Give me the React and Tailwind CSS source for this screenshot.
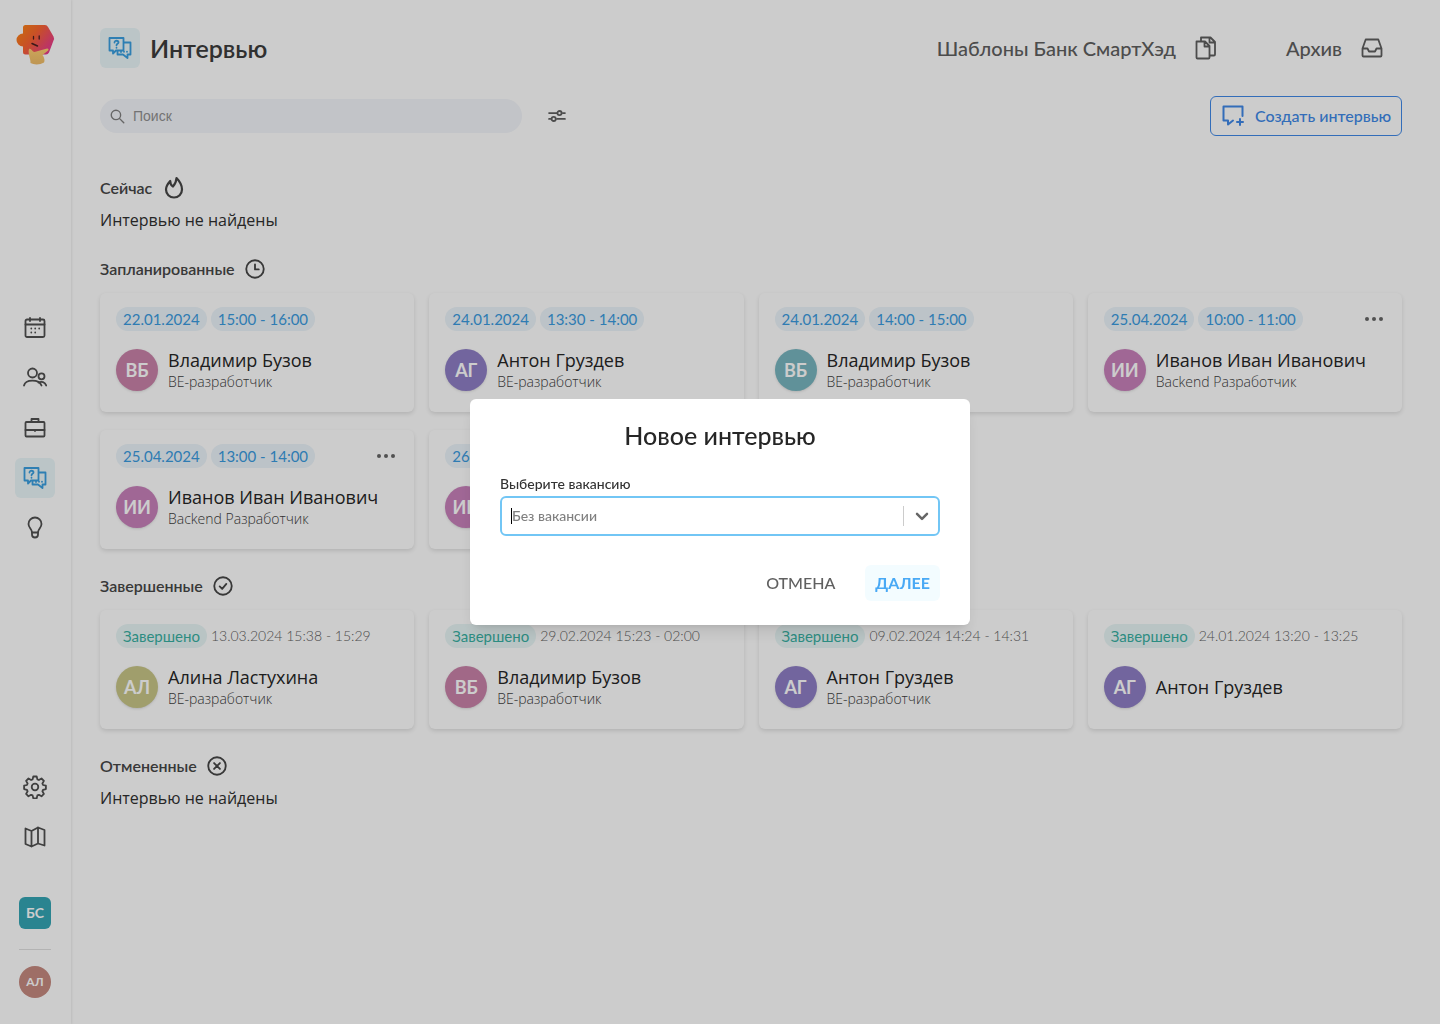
import React, { useState } from 'react'
import clsx from 'clsx'

const planned = [
  { date: '22.01.2024', time: '15:00 - 16:00', initials: 'ВБ', name: 'Владимир Бузов', role: 'BE-разработчик', color: 'bg-[#ca82a9]' },
  { date: '24.01.2024', time: '13:30 - 14:00', initials: 'АГ', name: 'Антон Груздев', role: 'BE-разработчик', color: 'bg-[#8f7fc6]' },
  { date: '24.01.2024', time: '14:00 - 15:00', initials: 'ВБ', name: 'Владимир Бузов', role: 'BE-разработчик', color: 'bg-[#78b6c0]' },
  { date: '25.04.2024', time: '10:00 - 11:00', initials: 'ИИ', name: 'Иванов Иван Иванович', role: 'Backend Разработчик', color: 'bg-[#c881bb]', menu: true },
  { date: '25.04.2024', time: '13:00 - 14:00', initials: 'ИИ', name: 'Иванов Иван Иванович', role: 'Backend Разработчик', color: 'bg-[#c881bb]', menu: true },
  { date: '26.04.2024', time: '13:00 - 14:00', initials: 'ИИ', name: 'Иванов Иван Иванович', role: 'Backend Разработчик', color: 'bg-[#c881bb]', menu: true },
]

const finished = [
  { when: '13.03.2024 15:38 - 15:29', initials: 'АЛ', name: 'Алина Ластухина', role: 'BE-разработчик', color: 'bg-[#c8c688]' },
  { when: '29.02.2024 15:23 - 02:00', initials: 'ВБ', name: 'Владимир Бузов', role: 'BE-разработчик', color: 'bg-[#ca82a9]' },
  { when: '09.02.2024 14:24 - 14:31', initials: 'АГ', name: 'Антон Груздев', role: 'BE-разработчик', color: 'bg-[#8f7fc6]' },
  { when: '24.01.2024 13:20 - 13:25', initials: 'АГ', name: 'Антон Груздев', color: 'bg-[#8f7fc6]' },
]

function Icon({ children, className = 'size-6', width = 1.8 }) {
  return (
    <svg viewBox="0 0 24 24" className={clsx('shrink-0', className)} fill="none" stroke="currentColor" strokeWidth={width} strokeLinecap="round" strokeLinejoin="round" aria-hidden="true">
      {children}
    </svg>
  )
}

function ChatIcon() {
  return (
    <Icon width={1.8}>
      <path d="M1.500 2h14v12.500H8L5 17.500v-3H1.500z" />
      <path d="M16 6.500h6.500v12h-3v3.500l-4.500-3.500H9.500v-3.500" />
      <path d="M6.500 6.500c0-2.400 4-2.300 4 0 0 1.400-2 1.300-2 2.800M8.500 11.700v.1" />
      <path d="M13 16v-.8M16 15.800v-.2M19 15.800v-.2" />
    </Icon>
  )
}

function CalendarIcon() {
  return (
    <Icon>
      <rect x="2.500" y="3.500" width="19" height="17.500" rx="1.500" />
      <path d="M2.500 8.500h19M7 2v3M17 2v3" />
      <path d="M8.300 12.500v.1M12.200 12.500v.1M16.200 12.500v.1M8.300 16.500v.1M12.200 16.500v.1" />
    </Icon>
  )
}

function PeopleIcon() {
  return (
    <Icon>
      <circle cx="9.500" cy="7" r="4.500" />
      <path d="M1 19.500c1.500-6.500 15-6.500 17.500 0" />
      <circle cx="18.500" cy="10.300" r="3" />
      <path d="M15.500 16.500c3-1.500 6.500-.5 7.700 3" />
    </Icon>
  )
}

function CaseIcon() {
  return (
    <Icon>
      <rect x="2.500" y="6" width="19" height="14.500" rx="1" />
      <path d="M8.500 6V3h7v3M2.500 14h19M12 14v1" />
    </Icon>
  )
}

function BulbIcon() {
  return (
    <Icon>
      <path d="M9 16.500c0-3.500-3.500-4.500-3.500-8.500a6.500 6.500 0 0 1 13 0c0 4-3.500 5-3.500 8.500z" />
      <path d="M9 16.500v2a3 3 0 0 0 6 0v-2" />
    </Icon>
  )
}

function GearIcon() {
  return (
    <Icon>
      <circle cx="12" cy="12" r="3.300" />
      <path d="M10.300 1.500h3.400l.7 2.900 1.500.6 2.600-1.500 2.400 2.400-1.500 2.600.6 1.500 2.900.7v3.400l-2.900.7-.6 1.500 1.500 2.600-2.400 2.400-2.600-1.500-1.500.6-.7 2.900h-3.400l-.7-2.900-1.500-.6-2.600 1.500-2.400-2.400 1.500-2.600-.6-1.500-2.900-.7v-3.400l2.900-.7.6-1.500-1.500-2.600 2.400-2.400L8.100 5l1.500-.6z" />
    </Icon>
  )
}

function MapIcon() {
  return (
    <Icon>
      <path d="M2.500 3.500l6 2.500 6.500-3.500 6.500 2.500v15.500L15 18.500 8.500 21.500l-6-2.500zM8.500 6v15.500M15 2.500v16" />
    </Icon>
  )
}

function Logo() {
  return (
    <svg viewBox="0 0 40 42" className="h-[42px] w-10" aria-hidden="true">
      <defs>
        <linearGradient id="head" x1="0" y1="0" x2="1" y2="0.6">
          <stop offset="0" stopColor="#fb8a10" />
          <stop offset="0.500" stopColor="#fb6530" />
          <stop offset="1" stopColor="#e93c8a" />
        </linearGradient>
        <linearGradient id="hand" x1="0" y1="0" x2="0" y2="1">
          <stop offset="0" stopColor="#ffcf70" />
          <stop offset="1" stopColor="#eebb68" />
        </linearGradient>
      </defs>
      <path d="M10.500 2H30q2 0 3 2l5.500 9.500q1 2 0 4L34 29.500q-1 2-3 2H10.500q-2.500 0-2.500-2.500v-5.500A6.500 6.500 0 1 1 8 10.500V4.500Q8 2 10.500 2z" fill="url(#head)" />
      <path d="M18.500 13.500v2.500M24.200 13v3" stroke="#4a2020" strokeWidth="1.300" strokeLinecap="round" />
      <path d="M17 20.500l5.500 2.500" stroke="#4a2020" strokeWidth="1.500" strokeLinecap="round" />
      <path d="M14 26c2-1.500 3 2.500 5.500 3L32 25.500c2 0 2 1.500.5 2.500l-5 4c2 2.500 2.500 6 1.500 7.500-4 2.500-10 2.500-13.500.5 .5-3-3-10-1.500-14z" fill="url(#hand)" />
    </svg>
  )
}

function Sidebar() {
  return (
    <aside className="sticky top-0 flex h-screen w-[71px] shrink-0 flex-col items-center justify-between pt-[23px] pr-px pb-[26px] text-[#505050] shadow-[1px_0_2px_rgba(0,0,0,0.08)]">
      <a href="#home" aria-label="Главная"><Logo /></a>
      <nav className="flex flex-col gap-2.5 pt-6">
        <a href="#calendar" aria-label="Календарь" className="grid size-10 place-items-center"><CalendarIcon /></a>
        <a href="#candidates" aria-label="Кандидаты" className="grid size-10 place-items-center"><PeopleIcon /></a>
        <a href="#vacancies" aria-label="Вакансии" className="grid size-10 place-items-center"><CaseIcon /></a>
        <a href="#interviews" aria-label="Интервью" className="grid size-10 place-items-center rounded-md bg-[#eaf7f9] text-[#3a9fe0]"><ChatIcon /></a>
        <a href="#skills" aria-label="Навыки" className="grid size-10 place-items-center"><BulbIcon /></a>
      </nav>
      <div className="flex flex-col items-center">
        <a href="#settings" aria-label="Настройки" className="grid size-10 place-items-center"><GearIcon /></a>
        <a href="#guide" aria-label="Справка" className="mt-2.5 grid size-10 place-items-center"><MapIcon /></a>
        <button className="mt-10 size-8 rounded-md bg-[#35a5b5] text-sm font-bold text-white">БС</button>
        <hr className="mt-5 mb-4 w-8 border-[#e0e0e0]" />
        <button className="size-8 rounded-full bg-[#c68a80] text-xs font-bold text-white">АЛ</button>
      </div>
    </aside>
  )
}

function Section({ title, icon, children }) {
  return (
    <section>
      <h2 className="flex h-5 items-center gap-2.5 text-base font-semibold text-[#464646]">
        {title}
        {icon}
      </h2>
      {children}
    </section>
  )
}

function Empty() {
  return <p className="mt-2.5 font-['Open_Sans',sans-serif] text-base leading-6 text-[#303030]">Интервью не найдены</p>
}

function Card({ item }) {
  return (
    <article className="rounded-md bg-white px-4 pt-3.5 pb-[21px] shadow-[0_2px_4px_rgba(0,0,0,0.12)]">
      <div className="flex h-6 items-center gap-1 text-[15px] whitespace-nowrap">
        {item.when ? (
          <>
            <span className="rounded-full bg-[#e8f6f6] px-[7px] leading-6 text-[#38b0a2]">Завершено</span>
            <time className="text-sm font-light text-[#606060]">{item.when}</time>
          </>
        ) : (
          <>
            <span className="rounded-full bg-[#ebf4fa] px-[7px] leading-6 text-[#3a9be0]">{item.date}</span>
            <span className="rounded-full bg-[#ebf4fa] px-[7px] leading-6 text-[#3a9be0]">{item.time}</span>
          </>
        )}
        {item.menu && (
          <button aria-label="Действия" className="ml-auto text-[#666]">
            <svg viewBox="0 0 24 24" className="size-6 fill-current"><circle cx="5" cy="12" r="2" /><circle cx="12" cy="12" r="2" /><circle cx="19" cy="12" r="2" /></svg>
          </button>
        )}
      </div>
      <div className="mt-[18px] flex items-center gap-2.5">
        <div className={clsx('grid size-[42px] shrink-0 place-items-center rounded-full text-lg font-bold text-white shadow-sm', item.color)}>{item.initials}</div>
        <div className="min-w-0 font-['Open_Sans',sans-serif] whitespace-nowrap">
          <h3 className="text-lg leading-[22px] text-[#262626]">{item.name}</h3>
          {item.role && <p className="-mb-0.5 text-sm leading-[22px] font-light text-[#404040]">{item.role}</p>}
        </div>
      </div>
    </article>
  )
}

function NewInterview({ onClose }) {
  return (
    <div className="fixed inset-0 flex items-center justify-center bg-black/20 p-4">
      <form role="dialog" aria-modal="true" aria-labelledby="dialog-title" onSubmit={(ev) => ev.preventDefault()} className="w-full max-w-[500px] rounded-md bg-white px-[30px] pt-5 pb-6 shadow-lg">
        <h2 id="dialog-title" className="text-center text-[25px] leading-8 font-medium text-[#262626]">Новое интервью</h2>
        <label htmlFor="vacancy" className="mt-[23px] block text-sm leading-5 font-medium text-[#333]">Выберите вакансию</label>
        <div className="relative mt-0.5 text-[#666]">
          <select id="vacancy" className="block h-10 w-full appearance-none rounded-md border-2 border-[#72c6f5] bg-white px-2.5 text-sm font-medium text-[#808080] outline-none">
            <option>Без вакансии</option>
          </select>
          <span className="pointer-events-none absolute top-3 left-[11px] h-4 w-px bg-black" />
          <div className="pointer-events-none absolute inset-y-0 right-0 flex items-center">
            <span className="h-5 w-px bg-[#ccc]" />
            <Icon className="mx-2 size-5" width={3}><path d="M6 9.500l6 6 6-6" /></Icon>
          </div>
        </div>
        <div className="mt-[29px] flex justify-end gap-5 text-base">
          <button type="button" onClick={onClose} className="h-9 px-2.5 font-medium text-[#606060]">ОТМЕНА</button>
          <button type="submit" className="h-9 rounded-md bg-[#f3fcff] px-2.5 font-bold text-[#49a9f5]">ДАЛЕЕ</button>
        </div>
      </form>
    </div>
  )
}

function App() {
  const [open, setOpen] = useState(true)
  const [search, setSearch] = useState('')

  return (
    <div className="flex min-h-screen bg-white font-['Lato',sans-serif] text-[#333]">
      <Sidebar />
      <main className="min-w-0 flex-1 pt-7 pr-[38px] pl-[29px]">
        <header className="flex items-center justify-between">
          <div className="flex items-center gap-2.5">
            <div className="grid size-10 place-items-center rounded-md bg-[#eaf7f9] text-[#3a9fe0]"><ChatIcon /></div>
            <h1 className="text-[25px] leading-10 font-semibold text-[#3c3c3c]">Интервью</h1>
          </div>
          <div className="flex items-center gap-[68px] pr-[18px] text-xl font-medium text-[#606060]">
            <a href="#templates" className="flex items-center gap-[18px]">
              Шаблоны Банк СмартХэд
              <Icon>
                <path d="M2.500 5.500h8.500l4.500 4.500v11.500q0 1-1 1h-11q-1 0-1-1zM10.500 5.500V10.500H15.500" />
                <path d="M7 5V1.500h9.500l4.500 4.500v12.500q0 1-1 1h-4M15.500 1.500V6.500H21" />
              </Icon>
            </a>
            <a href="#archive" className="flex items-center gap-[18px]">
              Архив
              <Icon>
                <path d="M2.500 12.500l3.200-9h12.600l3.200 9v7q0 1-1 1h-17q-1 0-1-1zM2.500 12.500h5l1.500 3h6l1.500-3h5" />
              </Icon>
            </a>
          </div>
        </header>

        <div className="mt-7 flex items-center">
          <label className="flex h-[34px] w-[422px] items-center gap-2 rounded-full bg-[#f3f5fa] px-2.5 text-[#808080]">
            <Icon className="size-[15px]" width={2.2}><circle cx="9.500" cy="9.500" r="7.500" /><path d="M15 15l7 7" /></Icon>
            <input aria-label="Поиск" placeholder="Поиск" value={search} onChange={(ev) => setSearch(ev.target.value)} className="min-w-0 flex-1 bg-transparent font-['Liberation_Sans',sans-serif] text-sm outline-none placeholder:text-[#909090]" />
          </label>
          <button aria-label="Фильтры" className="ml-[25px] text-[#606060]">
            <Icon className="size-5" width={2.2}>
              <path d="M2.500 8.500h9.500M19 8.500h2.500M2.500 15.500h1.500M12 15.500h9.500" />
              <circle cx="15" cy="8.500" r="2.500" />
              <circle cx="8" cy="15.500" r="2.500" />
            </Icon>
          </button>
          <button onClick={() => setOpen(true)} className="ml-auto flex h-10 items-center gap-2.5 rounded-md border border-[#4089e8] px-2.5 text-base font-medium whitespace-nowrap text-[#4089e8]">
            <Icon width={2}>
              <path d="M21.500 12V2.500h-19v14H7v4l5-4M19 15v6M16 18h6" />
            </Icon>
            Создать интервью
          </button>
        </div>

        <div className="mt-[42px] flex flex-col gap-[27px] pb-6">
          <Section title="Сейчас" icon={
            <Icon width={2.2}><path d="M11 10.500C13 8.500 14.200 5.500 14.500 2c3.500 3.500 5.500 7.500 5.500 11.500a8 8 0 0 1-16 0C4 10 6 7.500 8.200 5c0 2.500 1 4.500 2.800 5.500z" /></Icon>
          }>
            <Empty />
          </Section>
          <Section title="Запланированные" icon={
            <Icon className="size-5" width={2.2}><circle cx="12" cy="12" r="10.500" /><path d="M12 6.500V12.500h4.500" /></Icon>
          }>
            <div className="mt-3.5 grid grid-cols-4 gap-x-[15px] gap-y-[18px]">
              {planned.map((item, i) => <Card key={i} item={item} />)}
            </div>
          </Section>
          <Section title="Завершенные" icon={
            <Icon className="size-5" width={2.2}><circle cx="12" cy="12" r="10.500" /><path d="M8 12.500l3 3 5-6" /></Icon>
          }>
            <div className="mt-3.5 grid grid-cols-4 gap-[15px]">
              {finished.map((item, i) => <Card key={i} item={item} />)}
            </div>
          </Section>
          <Section title="Отмененные" icon={
            <Icon className="size-5" width={2.2}><circle cx="12" cy="12" r="10.500" /><path d="M8.500 8.500l7 7M15.500 8.500l-7 7" /></Icon>
          }>
            <Empty />
          </Section>
        </div>
      </main>
      {open && <NewInterview onClose={() => setOpen(false)} />}
    </div>
  )
}

export default App
